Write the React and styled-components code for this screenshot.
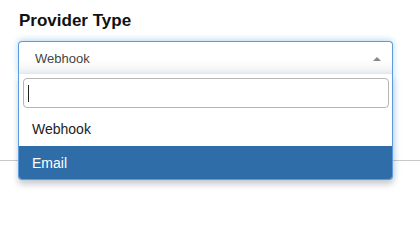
import React from "react";
import styled, { createGlobalStyle } from "styled-components";

const Global = createGlobalStyle`
  html, body { margin: 0; padding: 0; background: #fff; }
  body { font-family: "Liberation Sans", Arial, sans-serif; }
`;

const Page = styled.div`
  width: 420px;
  height: 222px;
  overflow: hidden;
  box-sizing: border-box;
  padding-top: 10px;
`;

const Field = styled.div`
  padding: 0 27px 0 18px;
`;

const Label = styled.div`
  font-size: 17px;
  font-weight: bold;
  color: #111;
  line-height: 22px;
  padding-left: 1px;
  margin-bottom: 9px;
`;

const Select = styled.div`
  position: relative;
  width: 375px;
`;

const Choice = styled.div`
  box-sizing: border-box;
  height: 33px;
  border: 1px solid #5d9be0;
  border-bottom: none;
  border-radius: 4px 4px 0 0;
  background: linear-gradient(to bottom, #fff 55%, #f2f2f2 100%);
  box-shadow: 0 -1px 6px rgba(82, 168, 236, 0.45);
  display: flex;
  align-items: center;
  padding: 0 10px 0 16px;
  font-size: 13px;
  color: #444;
`;

const ChoiceText = styled.span`
  flex: 1;
`;

const Arrow = styled.span`
  width: 0;
  height: 0;
  border-left: 4px solid transparent;
  border-right: 4px solid transparent;
  border-bottom: 4px solid #888;
  margin-right: 1px;
  margin-top: 1px;
`;

const Dropdown = styled.div`
  position: absolute;
  left: 0;
  right: 0;
  top: 33px;
  box-sizing: border-box;
  background: #fff;
  border: 1px solid #5d9be0;
  border-top: none;
  border-radius: 0 0 4px 4px;
  box-shadow: 0 5px 6px rgba(0, 0, 0, 0.16), 2px 0 6px rgba(82, 168, 236, 0.25);
  z-index: 2;
  overflow: hidden;
`;

const SearchWrap = styled.div`
  padding: 4px 3px 4px 4px;
`;

const Search = styled.div`
  box-sizing: border-box;
  height: 30px;
  border: 1px solid #b5b5b5;
  border-radius: 4px;
  display: flex;
  align-items: center;
  padding-left: 4px;
`;

const Caret = styled.span`
  width: 1px;
  height: 17px;
  background: #222;
`;

const Option = styled.div`
  height: ${(p) => (p.$first ? "34px" : "33px")};
  display: flex;
  align-items: center;
  padding-left: 13px;
  font-size: 14px;
  color: ${(p) => (p.$active ? "#fff" : "#222")};
  background: ${(p) => (p.$active ? "#2f6da8" : "transparent")};
`;

const Divider = styled.div`
  margin-top: 86px;
  height: 1px;
  background: #c8c8c8;
`;

export default function App() {
  return (
    <Page>
      <Global />
      <Field>
        <Label>Provider Type</Label>
        <Select>
          <Choice>
            <ChoiceText>Webhook</ChoiceText>
            <Arrow />
          </Choice>
          <Dropdown>
            <SearchWrap>
              <Search>
                <Caret />
              </Search>
            </SearchWrap>
            <Option $first>Webhook</Option>
            <Option $active>Email</Option>
          </Dropdown>
        </Select>
      </Field>
      <Divider />
    </Page>
  );
}
